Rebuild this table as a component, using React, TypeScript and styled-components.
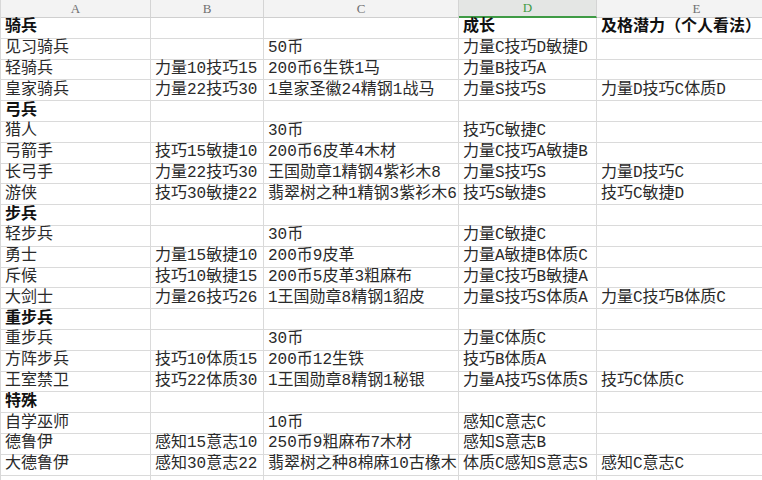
import styled, { createGlobalStyle } from "styled-components";

const GlobalStyle = createGlobalStyle`
  html, body {
    margin: 0;
    padding: 0;
    background: #ffffff;
    overflow: hidden;
  }
`;

/* ---------- layout ---------- */
const Sheet = styled.div`
  display: grid;
  grid-template-columns: 150px 113px 195px 138px 200px;
  grid-template-rows: 18px;
  grid-auto-rows: 20.8px;
  width: 796px;
  border-left: 1px solid #d8d8d8;
  font-family: "Liberation Mono", "Noto Sans CJK SC", sans-serif;
  font-size: 16px;
  color: #2a2a2a;
`;

const HeaderCell = styled.div<{ $active?: boolean }>`
  display: flex;
  align-items: center;
  justify-content: center;
  box-sizing: border-box;
  background: ${(p) => (p.$active ? "#e4e6e4" : "#f3f3f3")};
  border-right: 1px solid #d4d4d4;
  border-bottom: ${(p) => (p.$active ? "2px solid #3f9b45" : "1px solid #cfcfcf")};
  font-family: "Liberation Serif", "DejaVu Serif", serif;
  font-size: 13px;
  line-height: 16px;
  color: ${(p) => (p.$active ? "#3f9b45" : "#707070")};
`;

const Cell = styled.div<{ $bold?: boolean }>`
  display: flex;
  align-items: center;
  box-sizing: border-box;
  padding-left: 4px;
  border-right: 1px solid #dadada;
  border-bottom: 1px solid #dadada;
  white-space: nowrap;
  font-weight: ${(p) => (p.$bold ? 700 : 400)};
  color: ${(p) => (p.$bold ? "#111111" : "#2a2a2a")};
  line-height: 19px;
`;

/* ---------- data ---------- */
type Row = { cells: string[]; bold?: boolean };

const columns = ["A", "B", "C", "D", "E"];

const rows: Row[] = [
  { cells: ["骑兵", "", "", "成长", "及格潜力（个人看法）"], bold: true },
  { cells: ["见习骑兵", "", "50币", "力量C技巧D敏捷D", ""] },
  { cells: ["轻骑兵", "力量10技巧15", "200币6生铁1马", "力量B技巧A", ""] },
  { cells: ["皇家骑兵", "力量22技巧30", "1皇家圣徽24精钢1战马", "力量S技巧S", "力量D技巧C体质D"] },
  { cells: ["弓兵", "", "", "", ""], bold: true },
  { cells: ["猎人", "", "30币", "技巧C敏捷C", ""] },
  { cells: ["弓箭手", "技巧15敏捷10", "200币6皮革4木材", "力量C技巧A敏捷B", ""] },
  { cells: ["长弓手", "力量22技巧30", "王国勋章1精钢4紫衫木8", "力量S技巧S", "力量D技巧C"] },
  { cells: ["游侠", "技巧30敏捷22", "翡翠树之种1精钢3紫衫木6", "技巧S敏捷S", "技巧C敏捷D"] },
  { cells: ["步兵", "", "", "", ""], bold: true },
  { cells: ["轻步兵", "", "30币", "力量C敏捷C", ""] },
  { cells: ["勇士", "力量15敏捷10", "200币9皮革", "力量A敏捷B体质C", ""] },
  { cells: ["斥候", "技巧10敏捷15", "200币5皮革3粗麻布", "力量C技巧B敏捷A", ""] },
  { cells: ["大剑士", "力量26技巧26", "1王国勋章8精钢1貂皮", "力量S技巧S体质A", "力量C技巧B体质C"] },
  { cells: ["重步兵", "", "", "", ""], bold: true },
  { cells: ["重步兵", "", "30币", "力量C体质C", ""] },
  { cells: ["方阵步兵", "技巧10体质15", "200币12生铁", "技巧B体质A", ""] },
  { cells: ["王室禁卫", "技巧22体质30", "1王国勋章8精钢1秘银", "力量A技巧S体质S", "技巧C体质C"] },
  { cells: ["特殊", "", "", "", ""], bold: true },
  { cells: ["自学巫师", "", "10币", "感知C意志C", ""] },
  { cells: ["德鲁伊", "感知15意志10", "250币9粗麻布7木材", "感知S意志B", ""] },
  { cells: ["大德鲁伊", "感知30意志22", "翡翠树之种8棉麻10古橡木", "体质C感知S意志S", "感知C意志C"] },
  { cells: ["", "", "", "", ""] },
];

export default function App() {
  return (
    <>
      <GlobalStyle />
      <Sheet>
        {columns.map((c) => (
          <HeaderCell key={c} $active={c === "D"}>
            {c}
          </HeaderCell>
        ))}
        {rows.map((row, r) =>
          row.cells.map((text, i) => (
            <Cell key={`${r}-${i}`} $bold={row.bold}>
              {text}
            </Cell>
          ))
        )}
      </Sheet>
    </>
  );
}
